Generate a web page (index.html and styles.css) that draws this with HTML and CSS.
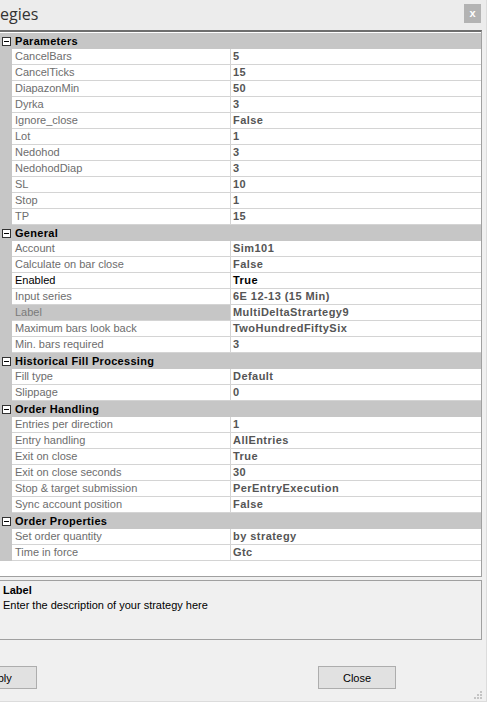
FILE: index.html
```html
<!DOCTYPE html>
<html>
<head>
<meta charset="utf-8">
<title>Strategies</title>
<link rel="stylesheet" href="styles.css">
</head>
<body>
	<div class="window">
		<div class="titlebar">
			<span class="title">egies</span>
			<span class="close-x">x</span>
		</div>

		<div class="grid">
			<div class="cat"><span class="toggle"></span>Parameters</div>
			<div class="row"><span class="gutter"></span><span class="name">CancelBars</span><span class="val">5</span></div>
			<div class="row"><span class="gutter"></span><span class="name">CancelTicks</span><span class="val">15</span></div>
			<div class="row"><span class="gutter"></span><span class="name">DiapazonMin</span><span class="val">50</span></div>
			<div class="row"><span class="gutter"></span><span class="name">Dyrka</span><span class="val">3</span></div>
			<div class="row"><span class="gutter"></span><span class="name">Ignore_close</span><span class="val">False</span></div>
			<div class="row"><span class="gutter"></span><span class="name">Lot</span><span class="val">1</span></div>
			<div class="row"><span class="gutter"></span><span class="name">Nedohod</span><span class="val">3</span></div>
			<div class="row"><span class="gutter"></span><span class="name">NedohodDiap</span><span class="val">3</span></div>
			<div class="row"><span class="gutter"></span><span class="name">SL</span><span class="val">10</span></div>
			<div class="row"><span class="gutter"></span><span class="name">Stop</span><span class="val">1</span></div>
			<div class="row"><span class="gutter"></span><span class="name">TP</span><span class="val">15</span></div>

			<div class="cat"><span class="toggle"></span>General</div>
			<div class="row"><span class="gutter"></span><span class="name">Account</span><span class="val">Sim101</span></div>
			<div class="row"><span class="gutter"></span><span class="name">Calculate on bar close</span><span class="val">False</span></div>
			<div class="row editable"><span class="gutter"></span><span class="name">Enabled</span><span class="val">True</span></div>
			<div class="row"><span class="gutter"></span><span class="name">Input series</span><span class="val">6E 12-13 (15 Min)</span></div>
			<div class="row selected"><span class="gutter"></span><span class="name">Label</span><span class="val">MultiDeltaStrartegy9</span></div>
			<div class="row"><span class="gutter"></span><span class="name">Maximum bars look back</span><span class="val">TwoHundredFiftySix</span></div>
			<div class="row"><span class="gutter"></span><span class="name">Min. bars required</span><span class="val">3</span></div>

			<div class="cat"><span class="toggle"></span>Historical Fill Processing</div>
			<div class="row"><span class="gutter"></span><span class="name">Fill type</span><span class="val">Default</span></div>
			<div class="row"><span class="gutter"></span><span class="name">Slippage</span><span class="val">0</span></div>

			<div class="cat"><span class="toggle"></span>Order Handling</div>
			<div class="row"><span class="gutter"></span><span class="name">Entries per direction</span><span class="val">1</span></div>
			<div class="row"><span class="gutter"></span><span class="name">Entry handling</span><span class="val">AllEntries</span></div>
			<div class="row"><span class="gutter"></span><span class="name">Exit on close</span><span class="val">True</span></div>
			<div class="row"><span class="gutter"></span><span class="name">Exit on close seconds</span><span class="val">30</span></div>
			<div class="row"><span class="gutter"></span><span class="name">Stop &amp; target submission</span><span class="val">PerEntryExecution</span></div>
			<div class="row"><span class="gutter"></span><span class="name">Sync account position</span><span class="val">False</span></div>

			<div class="cat"><span class="toggle"></span>Order Properties</div>
			<div class="row"><span class="gutter"></span><span class="name">Set order quantity</span><span class="val">by strategy</span></div>
			<div class="row"><span class="gutter"></span><span class="name">Time in force</span><span class="val">Gtc</span></div>
		</div>

		<div class="help">
			<div class="help-title">Label</div>
			<div class="help-text">Enter the description of your strategy here</div>
		</div>

		<div class="buttons">
			<button class="btn">Apply</button>
			<button class="btn">Close</button>
		</div>

		<svg class="grip" width="8" height="8" viewBox="0 0 8 8">
			<rect x="6" y="0" width="2" height="2" fill="#c4c4c4"/>
			<rect x="3" y="3" width="2" height="2" fill="#c4c4c4"/>
			<rect x="6" y="3" width="2" height="2" fill="#c4c4c4"/>
			<rect x="0" y="6" width="2" height="2" fill="#c4c4c4"/>
			<rect x="3" y="6" width="2" height="2" fill="#c4c4c4"/>
			<rect x="6" y="6" width="2" height="2" fill="#c4c4c4"/>
		</svg>
	</div>
</body>
</html>
```

FILE: styles.css
```css
body {
	margin: 0;
	background: #ffffff;
	font-family: "Liberation Sans", Arial, sans-serif;
	font-size: 11px;
}

.window {
	position: relative;
	width: 486px;
	height: 701px;
	background: #f0f0f0;
	border-right: 1px solid #dcdcdc;
	border-bottom: 1px solid #dcdcdc;
}

.titlebar {
	display: flex;
	justify-content: space-between;
	align-items: flex-start;
	height: 30px;
	background: #ececec;
}

.title {
	font-family: "Open Sans", "Noto Sans", sans-serif;
	font-size: 16px;
	line-height: 29px;
	color: #333333;
}

.close-x {
	width: 17px;
	height: 19px;
	margin: 4px 5px 0 0;
	background: #b3b3b3;
	color: #ffffff;
	font-weight: bold;
	font-size: 11px;
	line-height: 18px;
	text-align: center;
}

/* property grid */
.grid {
	width: 481px;
	height: 543px;
	padding-top: 1px;
	background: #ffffff;
	border-top: 2px solid #6f6f6f;
	border-right: 1px solid #a0a0a0;
	border-bottom: 1px solid #a0a0a0;
}

.cat {
	display: flex;
	align-items: center;
	height: 16px;
	background: #c6c6c6;
	font-weight: bold;
	color: #000000;
	letter-spacing: 0.3px;
}

.toggle {
	position: relative;
	box-sizing: border-box;
	width: 9px;
	height: 9px;
	margin: 0 4px 0 2px;
	border: 1px solid #333333;
	background: #ffffff;
}

.toggle::after {
	content: "";
	position: absolute;
	left: 1px;
	top: 3px;
	width: 5px;
	height: 1px;
	background: #000000;
}

.row {
	display: grid;
	grid-template-columns: 12px 219px 1fr;
	height: 16px;
}

.gutter {
	background: #c6c6c6;
}

.name, .val {
	box-sizing: border-box;
	height: 16px;
	line-height: 15px;
	border-bottom: 1px solid #d4d4d4;
	white-space: nowrap;
	overflow: hidden;
}

.name {
	padding-left: 3px;
	color: #6d6d6d;
	border-right: 1px solid #d4d4d4;
}

.val {
	padding-left: 2px;
	color: #555555;
	font-weight: bold;
	letter-spacing: 0.45px;
}

.editable .name,
.editable .val {
	color: #000000;
}

.selected .name {
	background: #c6c6c6;
	color: #7a7a7a;
}

/* description panel */
.help {
	box-sizing: border-box;
	width: 482px;
	height: 60px;
	margin-top: 3px;
	padding: 2px 3px;
	border: 1px solid #a0a0a0;
	border-left: none;
	background: #f0f0f0;
	color: #000000;
}

.help-title {
	font-weight: bold;
	line-height: 15px;
}

.help-text {
	line-height: 15px;
}

.buttons {
	display: flex;
	justify-content: space-between;
	margin: 26px 90px 0 -41px;
}

.btn {
	width: 78px;
	height: 23px;
	padding: 0;
	background: #e1e1e1;
	border: 1px solid #adadad;
	font-family: "Liberation Sans", Arial, sans-serif;
	font-size: 11px;
	color: #000000;
}

.grip {
	position: absolute;
	right: 4px;
	bottom: 2px;
}
```
